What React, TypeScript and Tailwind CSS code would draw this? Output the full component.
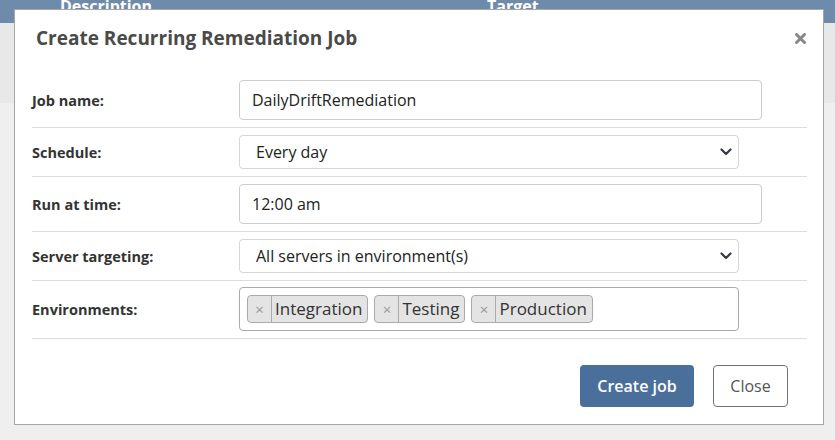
import React from "react";

const font = { fontFamily: '"Open Sans", "Noto Sans", sans-serif' };

function Chevron() {
  return (
    <svg width="12" height="8" viewBox="0 0 12 8" className="shrink-0">
      <path d="M1.5 1.5 6 6l4.5-4.5" fill="none" stroke="#343a40" strokeWidth="2.2" strokeLinecap="round" strokeLinejoin="round" />
    </svg>
  );
}

function Row({ label, children, first }: { label: string; children: React.ReactNode; first?: boolean }) {
  return (
    <div className={`flex items-center border-b border-[#dcdcdc] ${first ? "pt-[8px] pb-[7px]" : "py-[7px]"}`}>
      <div className="w-[207px] shrink-0 pt-[2px] text-[14.5px] font-bold text-[#333]">{label}</div>
      {children}
    </div>
  );
}

function TextBox({ value }: { value: string }) {
  return (
    <div className="flex h-[40px] w-[523px] items-center rounded-[4px] border border-[#ccc] bg-white px-[12px] text-[16px] text-[#222]">
      {value}
    </div>
  );
}

function SelectBox({ value }: { value: string }) {
  return (
    <div className="flex h-[34px] w-[500px] items-center justify-between rounded-[4px] border border-[#d6d6d6] bg-white pl-[16px] pr-[6px] text-[16px] text-[#222]">
      <span>{value}</span>
      <Chevron />
    </div>
  );
}

function Tag({ name }: { name: string }) {
  return (
    <div className="flex h-[28px] items-stretch rounded-[4px] border border-[#aaa] bg-[#e4e4e4] text-[17px] text-[#333]">
      <span className="flex w-[24px] items-center justify-center border-r border-[#aaa] text-[15px] text-[#999]">×</span>
      <span className="flex items-center pl-[3px] pr-[5px]">{name}</span>
    </div>
  );
}

export default function App() {
  return (
    <div className="relative h-[440px] w-[835px] overflow-hidden bg-[#efefef]" style={font}>
      <div className="flex h-[23px] bg-[#6f8bab] text-[16px] font-bold text-white">
        <span className="ml-[60px] mt-[-6px] w-[427px]">Description</span>
        <span className="mt-[-6px]">Target</span>
      </div>
      <div className="h-[80px] bg-[#e8e8e8]" />

      <div className="absolute left-[14px] top-[9px] h-[416px] w-[810px] border border-[#a6a6a6] bg-white">
        <div className="flex h-[62px] items-start justify-between pl-[21px] pr-[17px] pt-[14px]">
          <h2 className="text-[19px] font-bold text-[#4a4a4a]">Create Recurring Remediation Job</h2>
          <svg width="11" height="11" viewBox="0 0 11 11" className="mt-[9px]">
            <path d="M1.5 1.5l8 8M9.5 1.5l-8 8" stroke="#888" strokeWidth="3" strokeLinecap="round" />
          </svg>
        </div>

        <div className="ml-[17px] mr-[16px]">
          <Row label="Job name:" first>
            <TextBox value="DailyDriftRemediation" />
          </Row>
          <Row label="Schedule:">
            <SelectBox value="Every day" />
          </Row>
          <Row label="Run at time:">
            <TextBox value="12:00 am" />
          </Row>
          <Row label="Server targeting:">
            <SelectBox value="All servers in environment(s)" />
          </Row>
          <div className="flex items-center border-b border-[#dcdcdc] pt-[6px] pb-[7px]">
            <div className="w-[207px] shrink-0 pt-[2px] text-[14.5px] font-bold text-[#333]">Environments:</div>
            <div className="flex h-[44px] w-[500px] items-center gap-[6px] rounded-[4px] border border-[#aaa] bg-white px-[7px]">
              <Tag name="Integration" />
              <Tag name="Testing" />
              <Tag name="Production" />
            </div>
          </div>
        </div>

        <div className="flex justify-end gap-[19px] pr-[35px] pt-[26px]">
          <button className="h-[42px] w-[114px] rounded-[4px] bg-[#4a6f9b] text-[16px] font-semibold text-white">
            Create job
          </button>
          <button className="h-[42px] w-[75px] rounded-[4px] border border-[#6c757d] bg-white text-[16px] text-[#555]">
            Close
          </button>
        </div>
      </div>
    </div>
  );
}
